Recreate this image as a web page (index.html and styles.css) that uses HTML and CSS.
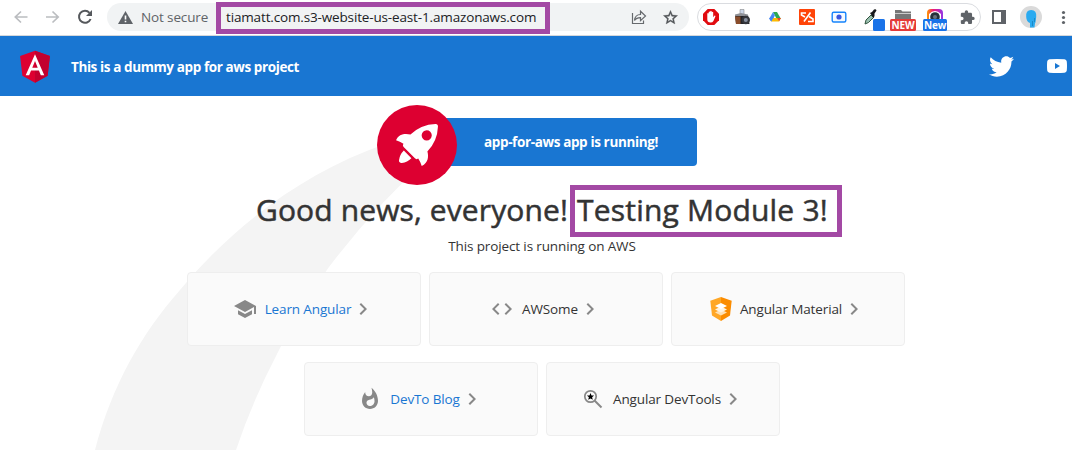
FILE: index.html
```html
<!DOCTYPE html>
<html lang="en">
<head>
<meta charset="utf-8">
<title>AppForAws</title>
<link rel="stylesheet" href="styles.css">
</head>
<body>
<div class="browser">
  <div class="slots nav">
    <svg viewBox="0 0 32 34"><path d="M27.500 17H15.500M21 11.500 15.300 17 21 22.500" fill="none" stroke="#bbbdc0" stroke-width="1.700"/></svg>
    <svg viewBox="0 0 32 34"><path d="M14 17h12M20.500 11.500 26.200 17 20.500 22.500" fill="none" stroke="#bbbdc0" stroke-width="1.700"/></svg>
    <svg viewBox="0 0 32 34"><path d="M26.600 19A6 6 0 1 1 25.500 12.800" fill="none" stroke="#55585c" stroke-width="2"/><path d="M28 10v6h-6z" fill="#55585c"/></svg>
  </div>
  <div class="omnibox">
    <svg class="warn" viewBox="0 0 15 13"><path d="M7.500 0 15 13H0z" fill="#5f6368"/><path d="M6.700 4.500h1.600v4H6.700zM6.700 9.700h1.600v1.600H6.700z" fill="#fff"/></svg>
    <span class="not-secure">Not secure</span>
    <span class="url">tiamatt.com.s3-website-us-east-1.amazonaws.com</span>
    <svg class="share" viewBox="0 0 16 16"><path d="M1.500 4v10.500h11v-3M3.500 11.500c.4-4 2.600-6 6-6V2.200L14.500 7l-5 4.700V8.600c-2.800 0-4.700.8-6 2.900z" fill="none" stroke="#66696d" stroke-width="1.200"/></svg>
    <svg class="star" viewBox="0 0 24 24"><path d="M22 9.240l-7.190-.62L12 2 9.190 8.630 2 9.240l5.460 4.730L5.820 21 12 17.270 18.180 21l-1.630-7.030L22 9.240zM12 15.400l-3.760 2.270 1-4.280-3.320-2.880 4.380-.38L12 6.100l1.710 4.040 4.380.38-3.320 2.880 1 4.280L12 15.400z" fill="#505357" stroke="#505357" stroke-width=".5"/></svg>
  </div>
  <div class="slots extensions">
    <svg viewBox="0 0 32 34"><path d="M12.700 9h6.600l4.700 4.700v6.600L19.300 25h-6.600L8 20.300v-6.600z" fill="#e10b10"/><path d="M12.300 17v-3.400q.7-1 1.400 0V12q.8-1 1.500 0v-.8q.8-1 1.500 0v1q.8-1 1.500 0v5l1.400-1.600q1 0 .8.8l-2 4.600q-.7 1.600-3 1.600-3.100 0-3.100-3z" fill="#fff"/></svg>
    <svg viewBox="0 0 32 34"><path d="M13 14V9.500h4V14" fill="#ccd6e8" stroke="#777" stroke-width=".5"/><path d="M8 15h13l1.500 9H9z" fill="#252427"/><path d="M8 16.500h5.500V24H9z" fill="#8a4d2b"/><path d="M8 14.500 14 13l7 1.500v1.500H8z" fill="#8e9096"/><circle cx="18.800" cy="20" r="4.200" fill="#34363c"/><circle cx="18.800" cy="20" r="2" fill="#868e9f"/></svg>
    <svg viewBox="0 0 32 34"><path d="M14 12h4l4 7h-4.300z" fill="#2da853"/><path d="m14 12 2 3.500-3.800 6-1.900-3z" fill="#4c8df6"/><path d="M14 18h7.800l-1.700 3.500h-8z" fill="#fbbc04"/><path d="m12.200 21.500 2.800-4.500-1-2-3.900 3.500z" fill="#4285f4"/><path d="M18 18h3.900l-1.700 3.200z" fill="#ea4335"/></svg>
    <svg viewBox="0 0 32 34"><rect x="8" y="9" width="16" height="16" rx="1" fill="#ff4408"/><path d="M15 13h-4.500v2l3.500 2M19.500 12.500l-6.500 9M18 16.500l4 2.500v2.500h-5" fill="none" stroke="#fff" stroke-width="1.600"/></svg>
    <svg viewBox="0 0 32 34"><rect x="9.200" y="12.200" width="13.600" height="9.800" rx="1.500" fill="#f3f9ff" stroke="#1684fc" stroke-width="1.400"/><circle cx="16" cy="17" r="2.600" fill="#3956df"/></svg>
    <svg viewBox="0 0 32 34"><path d="m10 24 1-4 5-5 2.500 2.500-5 5z" fill="#99bfae" stroke="#315440" stroke-width="1"/><path d="m15 13 2-1 2-2.500q2-1 2.500 1l-2 3v2.500l-1 2z" fill="#18191b"/><rect x="18" y="19" width="12" height="12" rx="1.500" fill="#1a73e8"/></svg>
    <svg viewBox="0 0 32 34"><path d="M8 10h6l1.500 1.500H24V19H8z" fill="#777"/><path d="M8 13h16v1H8z" fill="#ccc"/><rect x="3" y="19" width="26" height="12" rx="1.500" fill="#e53b39"/><text x="16" y="28.500" class="badge">NEW</text></svg>
    <svg viewBox="0 0 32 34"><defs><linearGradient id="rainbow"><stop stop-color="#f90"/><stop offset=".4" stop-color="#ef1879"/><stop offset="1" stop-color="#9138e8"/></linearGradient></defs><rect x="8" y="9" width="16" height="15" rx="4" fill="url(#rainbow)"/><path d="M10 14q6-6 12 0v6H10z" fill="#fff"/><circle cx="16" cy="17" r="4.800" fill="#273038"/><circle cx="16" cy="17" r="2" fill="#68737c"/><rect x="4" y="19" width="24" height="12" rx="1.500" fill="#1a73e8"/><text x="16" y="28.500" class="badge">New</text></svg>
    <svg viewBox="0 0 32 34"><path transform="translate(8.500 9.500) scale(.66)" d="M20.500 11H19V7c0-1.100-.9-2-2-2h-4V3.500a2.500 2.500 0 0 0-5 0V5H4c-1.100 0-1.990.9-1.990 2v3.800H3.500a2.700 2.700 0 0 1 0 5.400H2V20c0 1.100.9 2 2 2h3.800v-1.500a2.700 2.700 0 0 1 5.400 0V22H17c1.100 0 2-.9 2-2v-4h1.500a2.500 2.500 0 0 0 0-5z" fill="#5f6368"/></svg>
  </div>
  <div class="slots tools">
    <svg viewBox="0 0 32 34"><path d="M9 10h14v14H9zM11 12v10h7V12z" fill="#5f6368" fill-rule="evenodd"/></svg>
    <svg viewBox="0 0 32 34"><circle cx="16" cy="17" r="11" fill="#dadada"/><path d="M11.200 17q-.7-7 5-7t5 7-1.200 6l-.5 4.500h-4.500V23q-3.500-1-3.800-6z" fill="#2aaaf0"/><path d="M17.500 21v5M19.500 18v4" stroke="#167bb3" stroke-width=".7"/></svg>
    <svg viewBox="0 0 32 34"><circle cx="16.500" cy="12.500" r="1.600" fill="#5f6368"/><circle cx="16.500" cy="17.500" r="1.600" fill="#5f6368"/><circle cx="16.500" cy="22.500" r="1.600" fill="#5f6368"/></svg>
  </div>
  <div class="mark"></div>
</div>

<header class="toolbar">
  <svg class="logo" viewBox="0 0 250 250"><path fill="#dd0031" d="M125 30 31.900 63.200l14.200 123.100L125 230l78.900-43.700 14.200-123.100z"/><path fill="#c3002f" d="M125 30v200l78.900-43.700 14.200-123.100z"/><path fill="#fff" d="M125 52.100 66.800 182.600h21.700l11.700-29.200h49.400l11.700 29.200H183zm17 83.300h-34l17-40.900z"/></svg>
  <span class="app-title">This is a dummy app for aws project</span>
  <svg class="twitter" viewBox="0 0 24 24"><path fill="#fff" d="M23.954 4.569c-.885.389-1.830.654-2.825.775 1.014-.611 1.794-1.574 2.163-2.723-.951.555-2.005.959-3.127 1.184-.896-.959-2.173-1.559-3.591-1.559-2.717 0-4.920 2.203-4.920 4.917 0 .39.045.765.127 1.124C7.691 8.094 4.066 6.130 1.640 3.161c-.427.722-.666 1.561-.666 2.475 0 1.710.87 3.213 2.188 4.096-.807-.026-1.566-.248-2.228-.616v.061c0 2.385 1.693 4.374 3.946 4.827-.413.111-.849.171-1.296.171-.314 0-.615-.03-.916-.086.631 1.953 2.445 3.377 4.604 3.417-1.680 1.319-3.809 2.105-6.102 2.105-.39 0-.779-.023-1.170-.067 2.189 1.394 4.768 2.209 7.557 2.209 9.054 0 13.999-7.496 13.999-13.986 0-.209 0-.42-.015-.63.961-.689 1.800-1.560 2.460-2.548z"/></svg>
  <svg class="youtube" viewBox="0 0 20 14"><path fill="#fff" fill-rule="evenodd" d="M2.500.3Q10-.3 17.500.3 19.500.5 19.800 2.500q.4 4.500 0 9-.3 2-2.300 2.200-7.500.6-15 0-2-.2-2.300-2.200-.4-4.500 0-9Q.5.500 2.500.3zM8 4v6l5-3z"/></svg>
</header>

<main class="content">
  <svg class="swoosh" viewBox="0 0 450 354"><path fill="#f4f4f4" d="M95 354C112 289 142 237 180 194 235 128 305 76 385 48L430 61Q376 109 329 171 299 212 277 258 252 306 236 354z"/></svg>
  <div class="hero">
    <svg class="rocket" viewBox="0 0 101.678 101.678"><circle cx="50.839" cy="50.839" r="50.839" fill="#dd0031"/><g transform="translate(24.185 24.185)" fill="#fff"><path d="M3.400 42.615a3.084 3.084 0 0 0 3.553 3.553 21.419 21.419 0 0 0 12.215-6.107L9.511 30.400A21.419 21.419 0 0 0 3.400 42.615Z" transform="translate(.371 3.363)"/><path d="M53.300 3.221A3.090 3.090 0 0 0 50.081 0 48.227 48.227 0 0 0 18.322 13.437c-6-1.666-14.991-1.221-18.322 7.218A33.892 33.892 0 0 1 9.439 25.100l-.333.666a3.013 3.013 0 0 0 .555 3.553L23.985 43.641a2.900 2.900 0 0 0 3.553.555l.666-.333A33.892 33.892 0 0 1 32.647 53.300c8.550-3.664 8.884-12.326 7.218-18.322A48.227 48.227 0 0 0 53.300 3.221ZM34.424 9.772a6.439 6.439 0 1 1 9.106 9.106 6.368 6.368 0 0 1-9.106 0A6.467 6.467 0 0 1 34.424 9.772Z"/></g></svg>
    <span class="running">app-for-aws app is running!</span>
  </div>
  <h1><span class="news">Good news, everyone!</span><span class="module">Testing Module 3!</span></h1>
  <p class="sub">This project is running on AWS</p>
  <div class="cards">
    <a class="card link"><svg class="icon" viewBox="0 0 24 24"><path d="M5 13.180v4L12 21l7-3.820v-4L12 17zM12 3 1 9l11 6 9-4.910V17h2V9z"/></svg><span>Learn Angular</span><svg class="chev" viewBox="0 0 24 24"><path d="M10 6 8.590 7.410 13.170 12l-4.580 4.590L10 18l6-6z"/></svg></a>
    <a class="card"><svg class="icon" viewBox="0 0 24 24"><path d="M9.400 16.600 4.800 12l4.600-4.600L8 6l-6 6 6 6zm5.200 0 4.600-4.600-4.600-4.600L16 6l6 6-6 6z"/></svg><span>AWSome</span><svg class="chev" viewBox="0 0 24 24"><path d="M10 6 8.590 7.410 13.170 12l-4.580 4.590L10 18l6-6z"/></svg></a>
    <a class="card"><svg class="icon material" viewBox="0 0 22 24"><path d="M11 0 .3 3.800 2 18.600 11 24z" fill="#ffa726"/><path d="m11 0 10.700 3.800L20 18.600 11 24z" fill="#fb8c00"/><path d="m11 12.500 6 3-6 3-6-3z" fill="#ffe0b2"/><path d="m11 9.500 6 3-6 3-6-3z" fill="#fff3e0"/><path d="m11 6 6 3-6 3-6-3z" fill="#fff"/></svg><span>Angular Material</span><svg class="chev" viewBox="0 0 24 24"><path d="M10 6 8.590 7.410 13.170 12l-4.580 4.590L10 18l6-6z"/></svg></a>
    <a class="card link second-row"><svg class="icon" viewBox="0 0 24 24"><path d="M13.500.67s.74 2.650.74 4.800c0 2.060-1.350 3.730-3.410 3.730-2.070 0-3.630-1.670-3.630-3.730l.03-.36C5.210 7.510 4 10.620 4 14c0 4.420 3.580 8 8 8s8-3.580 8-8C20 8.610 17.410 3.800 13.500.67zM11.710 19c-1.780 0-3.220-1.400-3.220-3.140 0-1.620 1.050-2.760 2.810-3.120 1.770-.36 3.600-1.210 4.620-2.580.39 1.290.59 2.650.59 4.040 0 2.650-2.150 4.800-4.800 4.800z"/></svg><span>DevTo Blog</span><svg class="chev" viewBox="0 0 24 24"><path d="M10 6 8.590 7.410 13.170 12l-4.580 4.590L10 18l6-6z"/></svg></a>
    <a class="card"><svg class="icon" viewBox="0 0 24 24"><circle cx="9.500" cy="9.500" r="5.700" fill="none" stroke="#888" stroke-width="1.700"/><path d="m13.500 13.500 7 7" stroke="#888" stroke-width="2"/><path d="m9.500 6 1 2.400 2.600.2-2 1.700.7 2.500-2.300-1.400-2.300 1.400.7-2.500-2-1.700 2.600-.2z" fill="#000"/></svg><span>Angular DevTools</span><svg class="chev" viewBox="0 0 24 24"><path d="M10 6 8.590 7.410 13.170 12l-4.580 4.590L10 18l6-6z"/></svg></a>
  </div>
</main>
</body>
</html>
```
FILE: styles.css
```css
* { box-sizing: border-box; }
body { margin: 0; width: 1072px; height: 450px; overflow: hidden; background: #fff; color: #333; font: 13.5px/20px "Open Sans", "Noto Sans", sans-serif; letter-spacing: -.13px; }
svg { display: block; flex: none; }
span { white-space: nowrap; flex: none; }

.browser { position: relative; display: flex; align-items: flex-start; height: 36px; border-bottom: 1px solid #d5d8dc; }
.slots { display: flex; flex: none; }
.slots svg { width: 32px; height: 34px; }
.nav { width: 107px; }
.omnibox { display: flex; flex: none; align-items: center; width: 582px; height: 28px; margin-top: 3px; padding-left: 11px; border-radius: 14px; background: #f1f3f4; }
.warn { width: 15px; height: 13px; }
.not-secure { width: 85px; margin-left: 8px; color: #5f6368; }
.url { width: 405px; color: #202124; letter-spacing: -.15px; }
.share { width: 16px; height: 16px; }
.star { width: 17px; height: 17px; margin-left: 15px; }
.extensions { width: 284px; height: 28px; margin: 3px 0 0 8px; border: 1px solid #dadce0; border-radius: 14px; }
.extensions svg { margin-top: -4px; }
.extensions svg:first-child { margin-left: -3px; }
.tools { margin-left: 2px; }
.badge { fill: #fff; font: 700 10px "Open Sans", sans-serif; text-anchor: middle; }
.mark { position: absolute; left: 216px; top: 2px; width: 334px; height: 32px; border: 5px solid #a349a4; }

.toolbar { display: flex; align-items: center; height: 60px; padding-left: 15px; background: #1976d2; color: #fff; font-weight: 700; letter-spacing: -.4px; }
.logo { width: 40px; height: 40px; }
.app-title { width: 918px; margin: 2px 0 0 16px; }
.twitter { width: 25px; height: 25px; }
.youtube { width: 20px; height: 14px; margin-left: 33px; }

.content { position: relative; display: flex; flex-direction: column; align-items: center; width: 1092px; height: 354px; }
.swoosh { position: absolute; left: 0; top: 0; width: 450px; height: 354px; }
.hero { position: relative; display: flex; align-items: center; width: 303px; height: 48px; margin: 22px 0 0 -1px; padding-left: 90px; border-radius: 4px; background: #1976d2; color: #fff; font-weight: 700; letter-spacing: -.37px; }
.rocket { position: absolute; left: -17px; top: -13px; width: 80px; height: 80px; }
h1 { position: relative; display: flex; align-items: center; width: 586px; height: 52px; margin: 19px 0 0 6px; font-size: 30px; line-height: 40px; font-weight: 500; letter-spacing: .12px; -webkit-text-stroke: .5px #333; }
.news { width: 314px; padding-bottom: 2px; }
.module { width: 272px; height: 52px; padding-left: 2px; border: 5px solid #a349a4; line-height: 40px; letter-spacing: .2px; }
.sub { position: relative; margin: -1px 0 0 -8px; white-space: nowrap; }
.cards { position: relative; display: flex; flex-wrap: wrap; justify-content: center; gap: 16px 8px; width: 720px; margin-top: 16px; }
.card { display: flex; align-items: center; justify-content: center; width: 234px; height: 74px; border: 1px solid #eee; border-radius: 4px; background: #fafafa; }
.second-row { margin-left: -8px; }
.link { color: #1976d2; }
.icon { width: 24px; height: 24px; margin-right: 8px; fill: #888; }
.material { width: 22px; }
.chev { width: 24px; height: 24px; fill: #888; }
```
